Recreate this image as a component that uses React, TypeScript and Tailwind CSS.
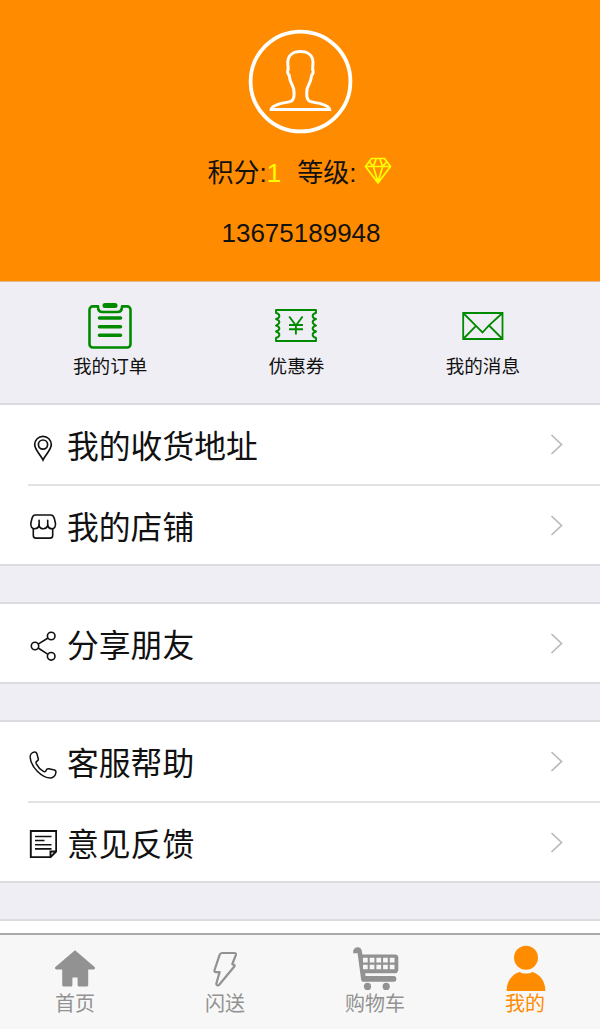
import { Fragment, type ReactNode } from 'react';

interface MenuItem {
  label: string;
  icon: ReactNode;
}

function AvatarIcon() {
  return (
    <svg className="ml-0.5" width="106" height="106" viewBox="0 0 106 106" fill="none" stroke="#fff">
      <circle cx="52.500" cy="52.500" r="49.900" strokeWidth="3.800" />
      <path
        strokeWidth="3"
        d="M52.400 22.600c-8 0-12.600 4.500-12.600 11.200l.4 6.700c-1.200.6-.6 4.600 1 5.800.4 4.800 1.400 7.200 3.400 10.600 1.200 2 1.500 4 1.500 7.400 0 4.500-.4 6.500-2.600 7.700-3.500 2-8 1.200-13.500 3.400-4.500 1.600-6.800 3.200-6.900 5.100h58.600c-.1-1.900-2.400-3.500-6.900-5.100-5.500-2.200-10-1.400-13.500-3.400-2.200-1.200-2.600-3.200-2.600-7.700 0-3.400.3-5.400 1.500-7.400 2-3.400 3-5.800 3.400-10.600 1.600-1.200 2.200-5.200 1-5.800l.4-6.700c0-6.700-4.600-11.200-12.600-11.200z"
      />
    </svg>
  );
}

function DiamondIcon() {
  return (
    <svg width="28" height="28" viewBox="0 0 28 28" fill="none" stroke="#ff0" strokeWidth="1.700" strokeLinejoin="round">
      <path d="M7.500 1.500h13l6 8L14 26 1.500 9.500zM1.500 9.500h25M9.300 9.500L14 25l4.700-15.500M9.300 9.500l3-8M18.700 9.500l-3-8M5.500 5l3.800 4.500M22.500 5l-3.800 4.500" />
    </svg>
  );
}

function OrderIcon() {
  return (
    <svg width="44" height="46" viewBox="0 0 44 46" fill="none" stroke="#008a00" strokeLinecap="round">
      <path
        strokeWidth="2.600"
        strokeLinejoin="round"
        d="M10 3.400H4.800A3.300 3.300 0 0 0 1.500 6.700v34.500a3.300 3.300 0 0 0 3.300 3.300h34.400a3.300 3.300 0 0 0 3.300-3.300V6.700a3.300 3.300 0 0 0-3.300-3.300H34c0 3.400-1.800 5.600-4.600 5.600H14.600C11.800 9 10 6.800 10 3.400z"
      />
      <path stroke="#efeef4" strokeWidth="3" strokeLinecap="butt" d="M11.800 3.400h20.400" />
      <path strokeWidth="5" d="M17 2.600h10" />
      <path strokeWidth="3.600" d="M11.500 15h21M11.500 23.800h21M11.500 32.300h21" />
    </svg>
  );
}

function CouponIcon() {
  return (
    <svg width="42" height="33" viewBox="0 0 42 33" fill="none" stroke="#008a00" strokeWidth="1.900" strokeLinejoin="round">
      <path d="M1 1h40v3c-4.500 1-4.500 5 0 6-4.500 1.500-4.500 4.500 0 6.500-4.500 1.500-4.500 4.500 0 6-4.500 1.500-4.500 5 0 6.500v3H1v-3c4.500-1.500 4.500-5 0-6.500 4.500-1.500 4.500-4.500 0-6 4.500-2 4.500-5 0-6.500 4.500-1 4.500-5 0-6z" />
      <path d="M14.200 7.500l6.700 9 6.700-9M20.900 16.500v9M14 16h14M14 20.200h14" />
    </svg>
  );
}

function MessageIcon() {
  return (
    <svg width="42" height="28" viewBox="0 0 42 28" fill="none" stroke="#008a00" strokeWidth="1.800">
      <path d="M1.200 1h39.300v26H1.200zM1.200 1l12.800 12.800 6.500 6.700 6-6.700L40.500 1M1.200 27L14 13.800M40.500 27L27 13.500" />
    </svg>
  );
}

function PinIcon() {
  return (
    <svg className="mt-[3px]" width="28" height="28" viewBox="0 0 28 28" fill="none" stroke="#111" strokeWidth="1.700">
      <path d="M14 26C11.500 20.500 5.700 16 5.700 10.600a8.300 8.300 0 0 1 16.600 0C22.300 16 16.500 20.500 14 26z" />
      <circle cx="14" cy="10.600" r="4.600" />
    </svg>
  );
}

function ShopIcon() {
  return (
    <svg width="28" height="28" viewBox="0 0 28 28" fill="none" stroke="#111" strokeWidth="1.600" strokeLinecap="round">
      <path d="M6.200 2h15.600c2 0 3 1.300 3.600 3.700l1 4.300c.7 3.500-1.200 5.800-3.500 5.800-2.300 0-3.700-1.500-4.200-3.300-.7 2-2.200 3.300-4.200 3.300s-3.900-1.300-4.400-3.300c-.6 1.800-2 3.300-4.300 3.300-2.700 0-4.600-2.300-3.900-5.800l1-4.300C3.500 3.300 4.300 2 6.200 2z" />
      <path d="M10.100 12.500V7.300M18.700 12.500V7.300M4.300 16v6.500c0 1.800.8 2.600 2.600 2.600h14.200c1.800 0 2.600-.8 2.600-2.600V16" />
    </svg>
  );
}

function ShareIcon() {
  return (
    <svg className="mt-0.5" width="28" height="30" viewBox="0 0 28 30" fill="none" stroke="#111" strokeWidth="1.600">
      <circle cx="6" cy="15" r="3.700" />
      <circle cx="22.200" cy="5" r="3.800" />
      <circle cx="22.200" cy="25.300" r="3.800" />
      <path d="M9.200 13.100L19 7M9.200 17l9.800 6.300" />
    </svg>
  );
}

function PhoneIcon() {
  return (
    <svg className="mt-0.5" width="28" height="28" viewBox="0 0 28 28" fill="none" stroke="#111" strokeWidth="1.500" strokeLinejoin="round">
      <path d="M5.500 1C2.500 1.300 1 4 1.200 6.500c.5 5.500 3.300 10 7.300 14 4.100 4 9 6.500 13 6.500 3 0 5.200-2.800 5.400-5.500.2-1.800-.8-2.600-2.400-2.800l-4.800-.9c-1.300-.2-2.200.6-2.600 1.600-.4 1.200-1.600 1.700-2.600 1-3-1.800-5.700-4.700-7.200-7.600-.6-1.300-.1-2.300.9-2.800 1.100-.5 1.300-1.500 1-2.500L7.900 2.800C7.500 1.500 6.800.9 5.500 1z" />
    </svg>
  );
}

function FeedbackIcon() {
  return (
    <svg width="28" height="28" viewBox="0 0 28 28" fill="none" stroke="#111" strokeWidth="1.900">
      <path d="M1.800 1h25.400v20.500l-5.700 5.700H1.800zM27.200 21.500h-5.700v5.700" />
      <path strokeWidth="1.600" d="M6 6.500h16.500M6 10.500h9.500M6 14.700h16.500M6 18.900h16.500" />
    </svg>
  );
}

function ChevronIcon() {
  return (
    <svg width="13" height="21" viewBox="0 0 13 21" fill="none" stroke="#b9b9bd" strokeWidth="1.700">
      <path d="M1.500 1l10 9.500-10 9.500" />
    </svg>
  );
}

function HomeIcon() {
  return (
    <svg className="mb-1.5" width="40" height="37" viewBox="0 0 40 37" fill="#929292">
      <path d="M20 .3L39.600 17c.9.900.3 2.400-1 2.400h-5.400V35c0 .9-.6 1.500-1.500 1.500h-7.600c-.9 0-1.500-.6-1.500-1.500v-7.500h-5.200V35c0 .9-.6 1.500-1.500 1.500H8.700c-.9 0-1.500-.6-1.500-1.500V19.400H1.400c-1.300 0-1.900-1.500-1-2.400z" />
    </svg>
  );
}

function FlashIcon() {
  return (
    <svg className="mb-1.5" width="24" height="36" viewBox="0 0 24 36" fill="none" stroke="#929292" strokeWidth="2.200" strokeLinejoin="round">
      <path d="M9 2h12.500c1.200 0 1.700.8 1.400 1.800L19.500 12.500c-.3.800 0 1.200.8 1.200h.3c1 0 1.300 1 .7 1.800L6.200 33.700c-1.200 1.300-3.200.4-2.800-1.400l3.200-11.200H2.800c-1 0-1.600-.7-1.400-1.600L6.600 3.800C7 2.700 7.800 2 9 2z" />
    </svg>
  );
}

function CartIcon() {
  return (
    <svg className="mb-[3px] ml-0.5" width="46" height="43" viewBox="0 0 46 43" fill="#929292">
      <path d="M.2 6.200C-.3 2.200 2.200.2 4.700.2c2 0 3.500 1 3.900 3l.9 4.200h32.800c1.800 0 3 1.200 3 3v12c0 2.400-1.400 3.900-3.600 3.900H12.200l.4 2.800H41c3.200 0 3.200 5.600 0 5.600H10.800c-1.600 0-2.400-.8-2.700-2.300L4.600 6.200z" />
      <circle cx="14.500" cy="39.400" r="3.600" />
      <circle cx="33.200" cy="39.400" r="3.600" />
      <path
        stroke="#f7f7f7"
        strokeWidth="4.700"
        strokeDasharray="4.700 2"
        fill="none"
        d="M10 13.200h32M10 20h32"
      />
    </svg>
  );
}

function UserIcon() {
  return (
    <svg className="mb-0.5 ml-0.5" width="40" height="46" viewBox="0 0 40 46" fill="#ff8c00">
      <circle cx="20" cy="12.800" r="12" />
      <path d="M.6 46C.6 36 6.500 29 13.500 27c4 2 9 2 13 0C33.500 29 39.400 36 39.400 46z" />
    </svg>
  );
}

function MenuRow({ label, icon }: MenuItem) {
  return (
    <div className="flex h-[79px] items-center pl-[29px] pr-[37px] last:h-[78px]">
      <span className="flex w-7 justify-center pt-1">{icon}</span>
      <span className="ml-2.5 flex-1 pt-[7px] text-[31.800px] leading-none">{label}</span>
      <ChevronIcon />
    </div>
  );
}

function MenuGroup({ items }: { items: MenuItem[] }) {
  return (
    <div className="border-y-2 border-[#dcdbe0] bg-white">
      {items.map((item, i) => (
        <Fragment key={item.label}>
          {i > 0 && <div className="ml-7 h-0.5 bg-[#e2e2e4]" />}
          <MenuRow {...item} />
        </Fragment>
      ))}
    </div>
  );
}

export default function App() {
  const shortcuts = [
    { label: '我的订单', icon: <OrderIcon /> },
    { label: '优惠券', icon: <CouponIcon /> },
    { label: '我的消息', icon: <MessageIcon /> },
  ];

  const groups: MenuItem[][] = [
    [
      { label: '我的收货地址', icon: <PinIcon /> },
      { label: '我的店铺', icon: <ShopIcon /> },
    ],
    [{ label: '分享朋友', icon: <ShareIcon /> }],
    [
      { label: '客服帮助', icon: <PhoneIcon /> },
      { label: '意见反馈', icon: <FeedbackIcon /> },
    ],
  ];

  const tabs = [
    { label: '首页', icon: <HomeIcon />, active: false },
    { label: '闪送', icon: <FlashIcon />, active: false },
    { label: '购物车', icon: <CartIcon />, active: false },
    { label: '我的', icon: <UserIcon />, active: true },
  ];

  return (
    <div className="flex h-[1029px] w-[600px] flex-col overflow-hidden bg-[#efeef4] font-['Liberation_Sans','Noto_Sans_CJK_SC',sans-serif] text-[#111]">
      <header className="flex h-[282px] shrink-0 flex-col items-center border-b border-[#e0b98c] bg-[#ff8c00] pt-[29px]">
        <AvatarIcon />
        <div className="mt-[22px] flex h-8 items-center text-[26px] leading-8">
          <span>积分:</span>
          <span className="text-[#ff0]">1</span>
          <span className="ml-4">等级:</span>
          <span className="mb-1 ml-2">
            <DiamondIcon />
          </span>
        </div>
        <div className="ml-0.5 mt-7 text-[26px] leading-8">13675189948</div>
      </header>

      <nav className="flex h-[121px] shrink-0 pl-[17px] pr-6">
        {shortcuts.map((item) => (
          <div key={item.label} className="flex flex-1 flex-col items-center pt-5">
            <span className="flex h-[47px] items-center">{item.icon}</span>
            <span className="mt-1 text-[18.600px] leading-7">{item.label}</span>
          </div>
        ))}
      </nav>

      <main className="flex min-h-0 flex-1 flex-col gap-9 overflow-hidden">
        {groups.map((items) => (
          <MenuGroup key={items[0].label} items={items} />
        ))}
        <div className="flex-1 border-t-2 border-[#dcdbe0] bg-white" />
      </main>

      <footer className="flex h-24 shrink-0 border-t-2 border-[#aaa] bg-[#f7f7f7]">
        {tabs.map((tab) => (
          <div
            key={tab.label}
            className={`flex flex-1 flex-col items-center ${tab.active ? 'text-[#ff8c00]' : 'text-[#929292]'}`}
          >
            <span className="flex h-[58px] items-end justify-center">{tab.icon}</span>
            <span className="pt-px text-xl leading-5">{tab.label}</span>
          </div>
        ))}
      </footer>
    </div>
  );
}
